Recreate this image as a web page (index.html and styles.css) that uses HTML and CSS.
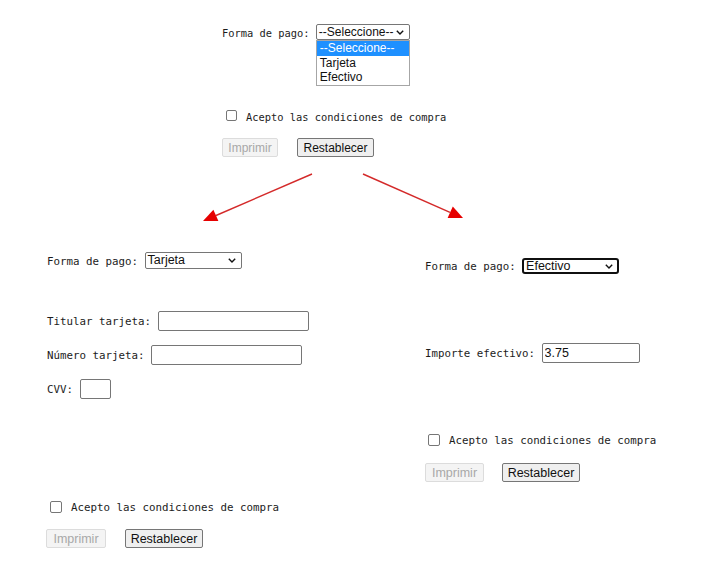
FILE: index.html
```html
<!DOCTYPE html>
<html lang="es">
<head>
<meta charset="utf-8">
<title>Forma de pago</title>
<link rel="stylesheet" href="styles.css">
</head>
<body>
<section class="panel panel-top">
  <div class="row row-pay">
    <span class="label">Forma de pago:</span>
    <div class="select-wrap">
      <div class="select sel-top" role="listbox">
        <span class="sel-text">--Seleccione--</span>
        <svg class="chev" width="8" height="5" viewBox="0 0 8 5"><path d="M0.8 0.8 L4 4 L7.2 0.8" fill="none" stroke="#111" stroke-width="1.4"/></svg>
      </div>
      <ul class="dropdown">
        <li class="opt active">--Seleccione--</li>
        <li class="opt">Tarjeta</li>
        <li class="opt">Efectivo</li>
      </ul>
    </div>
  </div>
  <div class="row row-check">
    <input type="checkbox" class="check">
    <span class="label">Acepto las condiciones de compra</span>
  </div>
  <div class="row row-buttons">
    <button class="btn btn-print" disabled>Imprimir</button>
    <button class="btn btn-reset">Restablecer</button>
  </div>
</section>

<svg class="arrows" width="710" height="60" viewBox="0 165 710 60">
  <line x1="312" y1="174" x2="216" y2="215.5" stroke="#d42a2a" stroke-width="1.4"/>
  <polygon points="203,221 218.4,221 213.4,209.8" fill="#e60000"/>
  <line x1="363" y1="174" x2="450" y2="212.4" stroke="#d42a2a" stroke-width="1.4"/>
  <polygon points="463,218 447.6,218 452.8,206.6" fill="#e60000"/>
</svg>

<div class="states">
  <section class="panel panel-left">
    <div class="row row-pay">
      <span class="label">Forma de pago:</span>
      <div class="select sel-left" role="listbox">
        <span class="sel-text">Tarjeta</span>
        <svg class="chev" width="8" height="5" viewBox="0 0 8 5"><path d="M0.8 0.8 L4 4 L7.2 0.8" fill="none" stroke="#111" stroke-width="1.4"/></svg>
      </div>
    </div>
    <div class="row row-field row-first">
      <span class="label">Titular tarjeta:</span>
      <input type="text" class="input in-wide">
    </div>
    <div class="row row-field">
      <span class="label">Número tarjeta:</span>
      <input type="text" class="input in-wide">
    </div>
    <div class="row row-field">
      <span class="label">CVV:</span>
      <input type="text" class="input in-cvv">
    </div>
    <div class="row row-check">
      <input type="checkbox" class="check">
      <span class="label">Acepto las condiciones de compra</span>
    </div>
    <div class="row row-buttons">
      <button class="btn btn-print" disabled>Imprimir</button>
      <button class="btn btn-reset">Restablecer</button>
    </div>
  </section>

  <section class="panel panel-right">
    <div class="row row-pay">
      <span class="label">Forma de pago:</span>
      <div class="select sel-right" role="listbox">
        <span class="sel-text">Efectivo</span>
        <svg class="chev" width="8" height="5" viewBox="0 0 8 5"><path d="M0.8 0.8 L4 4 L7.2 0.8" fill="none" stroke="#111" stroke-width="1.4"/></svg>
      </div>
    </div>
    <div class="row row-field row-first">
      <span class="label">Importe efectivo:</span>
      <input type="text" class="input in-amount" value="3.75">
    </div>
    <div class="row row-check">
      <input type="checkbox" class="check">
      <span class="label">Acepto las condiciones de compra</span>
    </div>
    <div class="row row-buttons">
      <button class="btn btn-print" disabled>Imprimir</button>
      <button class="btn btn-reset">Restablecer</button>
    </div>
  </section>
</div>
</body>
</html>
```

FILE: styles.css
```css
html, body {
  margin: 0;
  padding: 0;
  background: #ffffff;
}

body {
  width: 710px;
  height: 570px;
  overflow: hidden;
  color: #1c1c1c;
  font-family: "DejaVu Sans Mono", monospace;
}

.panel {
  display: flex;
  flex-direction: column;
}

.row {
  display: flex;
  align-items: center;
  gap: 1ch;
}

.label {
  white-space: nowrap;
  line-height: 1;
  padding-top: 1.5px;
  margin-bottom: -1.5px;
}

/* ---------- controls ---------- */
.select {
  box-sizing: border-box;
  display: flex;
  align-items: center;
  justify-content: space-between;
  font-family: "Liberation Sans", Arial, sans-serif;
  color: #111;
  background: #fff;
  border: 1px solid #767676;
  border-radius: 2px;
  padding: 0 5px 0 2px;
  line-height: 1;
}

.sel-text {
  white-space: nowrap;
}

.chev {
  display: block;
  flex: none;
}

.input {
  box-sizing: border-box;
  height: 20px;
  margin: 0;
  padding: 1px 2px;
  font-family: "Liberation Sans", Arial, sans-serif;
  font-size: 12.5px;
  color: #111;
  border: 1px solid #767676;
  border-radius: 2px;
  background: #fff;
}

.check {
  appearance: none;
  -webkit-appearance: none;
  box-sizing: border-box;
  margin: 0;
  background: #fff;
  border: 1px solid #767676;
  border-radius: 2px;
}

.btn {
  box-sizing: border-box;
  margin: 0;
  padding: 0;
  font-family: "Liberation Sans", Arial, sans-serif;
  border-radius: 2px;
}

.btn-print {
  color: #a8a8a8;
  background: #f4f4f4;
  border: 1px solid #dcdcdc;
}

.btn-reset {
  color: #111;
  background: #efefef;
  border: 1px solid #767676;
}

/* ---------- top panel ---------- */
.panel-top {
  height: 165px;
  font-size: 10.4px;
}

.panel-top .row-pay {
  margin-top: 24px;
  height: 16px;
  padding-left: 222px;
}

.select-wrap {
  position: relative;
  display: flex;
}

.sel-top {
  width: 94px;
  height: 16px;
  font-size: 12px;
}

.dropdown {
  position: absolute;
  left: 0;
  top: 16px;
  width: 94px;
  margin: 0;
  padding: 0;
  list-style: none;
  box-sizing: border-box;
  background: #fff;
  border: 1px solid #a6a6a6;
  font-family: "Liberation Sans", Arial, sans-serif;
  font-size: 12px;
  color: #111;
  z-index: 2;
}

.opt {
  height: 14.5px;
  line-height: 14.5px;
  padding-left: 3px;
}

.opt.active {
  background: #1e90ff;
  color: #fff;
}

.panel-top .row-check {
  margin-top: 70px;
  padding-left: 226px;
  gap: 9px;
}

.panel-top .check {
  width: 11px;
  height: 11px;
}

.panel-top .row-buttons {
  margin-top: 17px;
  padding-left: 222px;
  gap: 19px;
}

.panel-top .btn {
  height: 19px;
  font-size: 12px;
}

.panel-top .btn-print { width: 56px; }
.panel-top .btn-reset { width: 77px; }

/* ---------- arrows ---------- */
.arrows {
  display: block;
}

/* ---------- lower states ---------- */
.states {
  display: grid;
  grid-template-columns: 380px 1fr;
}

.panel-left {
  padding-left: 47px;
  font-size: 10.8px;
}

.panel-right {
  padding-left: 45px;
  font-size: 10.75px;
}

.panel-left .row-pay {
  margin-top: 27px;
  height: 17px;
}

.sel-left {
  width: 97px;
  height: 17px;
  font-size: 12.5px;
}

.panel-left .row-first { margin-top: 42px; }
.panel-left .row-field + .row-field { margin-top: 14px; }

.in-wide { width: 151px; }
.in-cvv { width: 31px; }

.panel-left .row-check {
  margin-top: 102px;
  padding-left: 3px;
  gap: 9px;
}

.panel-left .check,
.panel-right .check {
  width: 12px;
  height: 12px;
}

.panel-left .row-buttons {
  margin-top: 16px;
  margin-left: -1px;
  gap: 19px;
}

.panel-left .btn,
.panel-right .btn {
  height: 19px;
  font-size: 12.5px;
}

.panel-left .btn-print { width: 60px; }
.panel-left .btn-reset { width: 78px; }

.panel-right .row-pay {
  margin-top: 33px;
  height: 16px;
}

.sel-right {
  width: 97px;
  height: 16px;
  font-size: 12.5px;
  border: 2px solid #101010;
  border-radius: 3px;
  padding: 0 4px 0 2px;
}

.panel-right .row-first { margin-top: 69px; }

.in-amount { width: 98px; }

.panel-right .row-check {
  margin-top: 71px;
  padding-left: 3px;
  gap: 9px;
}

.panel-right .row-buttons {
  margin-top: 17px;
  gap: 18px;
}

.panel-right .btn-print { width: 59px; }
.panel-right .btn-reset { width: 78px; }
```
